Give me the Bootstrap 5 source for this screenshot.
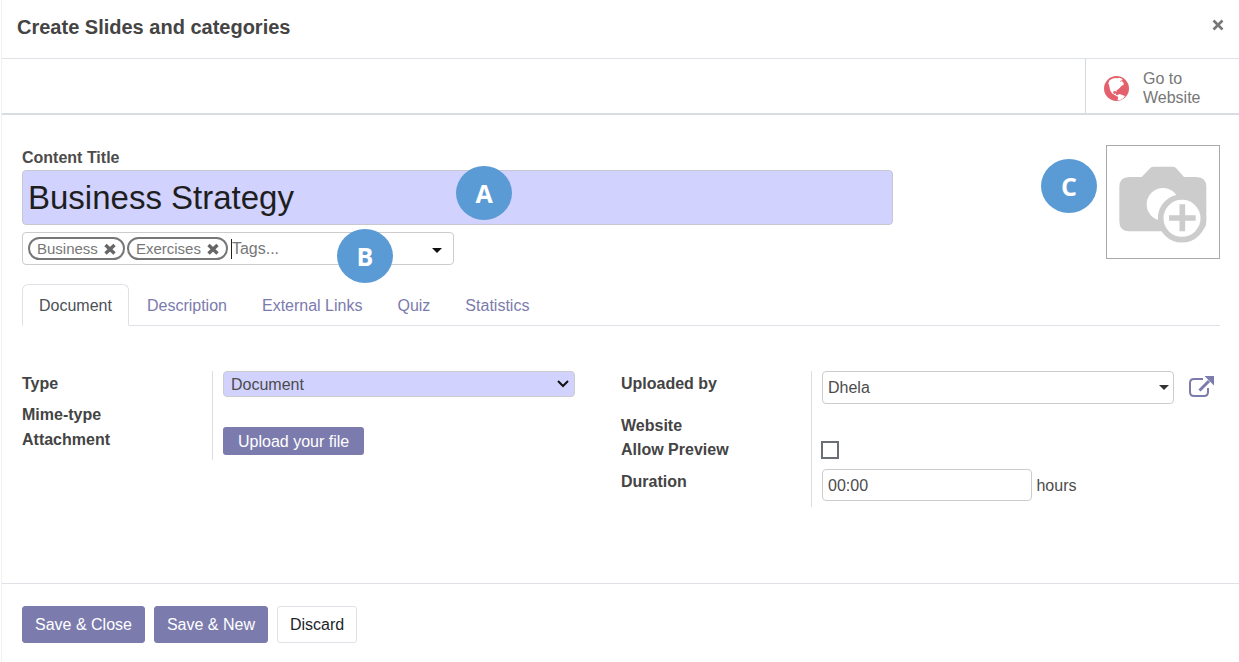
<!DOCTYPE html>
<html lang="en">
<head>
<meta charset="utf-8">
<meta name="viewport" content="width=device-width, initial-scale=1">
<title>Create Slides and categories</title>
<link href="https://cdn.jsdelivr.net/npm/bootstrap@5.3.0/dist/css/bootstrap.min.css" rel="stylesheet">
<style>
  body { font-family: "Liberation Sans", Arial, sans-serif; font-size: 16px; line-height: 24px; color: #4c4c4c; background: #fff; }
  .dialog { min-height: 100vh; margin-left: 1px; border-left: 1px solid #f0f0f0; }
  .dialog-head { height: 59px; padding: 0 10px 4px 15px; border-bottom: 1px solid #dee2e6; }
  .dialog-head h1 { font-size: 20px; font-weight: 700; line-height: 30px; color: #444; }
  .close-btn { padding: 5px; line-height: 0; margin-bottom: 4px; color: #777; }
  .stat-bar { height: 56px; border-bottom: 2px solid #d8dde3; }
  .stat-btn { width: 154px; padding: 4px 16px 0 18px; gap: 14px; border: 0; border-left: 1px solid #d5dae0; background: #fff; color: #777; line-height: 19px; text-align: left; }
  .sheet { padding: 30px 19px 0 20px; }
  .title-col { margin-right: 148px; padding-top: 1px; }
  .title-input { height: 55px; padding: 0 5px; font-size: 33px; color: #1e1e1e; background: #d2d2ff; border: 1px solid #c8c8d0; border-radius: 4px; }
  .marker { display: flex; align-items: center; justify-content: center; width: 56px; height: 54px; border-radius: 50%; background: #5b9bd5; color: #fff; font: 700 25px/32px "Open Sans", sans-serif; }
  .marker-a { position: absolute; top: -4px; left: 434px; }
  .marker-b { position: absolute; top: -4px; left: 314px; }
  .marker-c { margin: 14px 9px 0 0; }
  .tag-box { width: 432px; max-width: 100%; height: 33px; margin-top: 7px; padding: 0 11px 0 5px; gap: 2px; border: 1px solid #ccc; border-radius: 4px; }
  .tag { height: 23px; padding: 0 7px; gap: 6px; border: 2px solid #777; border-radius: 12px; color: #777; font-size: 15px; line-height: 19px; }
  .tag button { border: 0; padding: 0; background: none; color: #666; line-height: 0; }
  .tag-entry { width: 90px; height: 20px; margin-left: 1px; padding: 0; border: 0; border-left: 1px solid #222; outline: 0; }
  .tag-entry::placeholder { color: #777; }
  .drop-btn { border: 0; padding: 0; margin-top: 4px; background: none; line-height: 0; color: #111; }
  .picture-btn { width: 114px; height: 114px; padding: 4px 0 0; border: 1px solid #aaa; background: #fff; }
  .nav-tabs { margin-top: 19px; --bs-nav-tabs-link-active-color: #4c5156; --bs-nav-tabs-border-color: #dee2e6; --bs-nav-link-color: #7c7bad; --bs-nav-link-hover-color: #5f5e97; column-gap: 1px; }
  .nav-tabs .nav-link { padding: 9px 16px 7px; line-height: 24px; }
  .groups { display: grid; grid-template-columns: 1fr 1fr; padding-top: 45px; padding-bottom: 40px; }
  .group-left { padding-right: 46px; }
  .field-row { display: flex; min-height: 24px; }
  .field-row > .key { flex: 0 0 190px; font-weight: 700; color: #444; }
  .field-row > .value { flex: 1 1 auto; min-width: 0; padding-left: 10px; border-left: 1px solid #ddd; }
  .h-type { height: 32px; } .h-file { height: 33px; } .h-user { height: 43px; } .h-preview { height: 31px; } .h-time { height: 38px; }
  .h-type > .key, .h-user > .key, .h-file > .key, .h-time > .key { padding-top: 1px; }
  .type-select { display: block; width: 100%; height: 26px; padding: 1px 7px 0; border: 1px solid #ccc; border-radius: 4px; color: #4c4c4c; appearance: none;
    background: #d2d2ff url("data:image/svg+xml,%3Csvg xmlns='http://www.w3.org/2000/svg' width='12' height='8' viewBox='0 0 12 8'%3E%3Cpath d='M1 1l5 5 5-5' fill='none' stroke='%23111' stroke-width='2'/%3E%3C/svg%3E") no-repeat right 5px center; }
  .user-select { flex: 1 1 auto; min-width: 0; height: 33px; padding: 0 5px; border: 1px solid #ccc; border-radius: 4px; color: #4c4c4c; appearance: none;
    background: #fff url("data:image/svg+xml,%3Csvg xmlns='http://www.w3.org/2000/svg' width='10' height='5' viewBox='0 0 10 5'%3E%3Cpath d='M0 0h10L5 5z' fill='%23333'/%3E%3C/svg%3E") no-repeat right 4px center; }
  .open-btn { flex: none; margin: 5px 6px 0 15px; border: 0; padding: 0; background: none; color: #7c7bad; line-height: 0; }
  .upload-btn { display: block; height: 28px; padding: 1px 15px 0; border: 0; border-radius: 3px; background: #7c7bad; color: #fff; }
  .preview-check { display: block; appearance: none; width: 18px; height: 18px; margin: 3px 0 0 -1px; border: 2px solid #6b6f75; background: #fff; }
  .time-input { width: 210px; height: 32px; padding: 1px 5px 0; border: 1px solid #ccc; border-radius: 4px; color: #4c4c4c; }
  .dialog-foot { padding: 22px 20px 19px; gap: 9px; border-top: 1px solid #dee2e6; }
  .dialog-foot .btn { height: 37px; padding: 0 12px; border-radius: 3px; line-height: 24px; }
  .btn-violet { --bs-btn-color: #fff; --bs-btn-bg: #7c7bad; --bs-btn-border-color: #7c7bad; --bs-btn-hover-color: #fff; --bs-btn-hover-bg: #66659c; }
  .btn-plain { --bs-btn-color: #212529; --bs-btn-bg: #fff; --bs-btn-border-color: #dee2e6; --bs-btn-hover-bg: #f5f5f7; }
</style>
</head>
<body>
<div class="dialog d-flex flex-column">
  <header class="dialog-head d-flex align-items-center justify-content-between">
    <h1 class="m-0">Create Slides and categories</h1>
    <button class="close-btn border-0 bg-transparent" type="button" aria-label="Close">
      <svg width="12" height="12" viewBox="0 0 12 12"><path d="M1.500 1.500l9 9M10.500 1.500l-9 9" stroke="currentColor" stroke-width="2.600"/></svg>
    </button>
  </header>

  <div class="stat-bar d-flex justify-content-end">
    <button class="stat-btn d-flex align-items-center" type="button">
      <svg class="flex-shrink-0" width="25" height="25" viewBox="0 0 74 74"><circle cx="37" cy="37" r="37" fill="#e4606d"/>
        <path fill="#fff" d="M13 21l3-8 8-5 9-2 6 1 6-2 8 3 2 4-6 2-2 4 6-3 5 6 0 6-6 2-5 6-5 4-5 4 0 5-4-4-5 2-1 4 4 3 4-2 1 5 5 2-3 2-6-4-8-4-5-8-2-7-1-6zM40 56l6-3 8 3 8 3-3 5-6 5-8 3-5 0 2-8-3-4z"/>
      </svg>
      <span>Go to Website</span>
    </button>
  </div>

  <main class="sheet flex-grow-1">
    <div class="d-flex align-items-start">
      <div class="title-col flex-grow-1">
        <label class="d-block fw-bold" for="title">Content Title</label>
        <div class="position-relative">
          <input class="title-input d-block w-100" id="title" type="text" value="Business Strategy">
          <span class="marker marker-a">A</span>
        </div>
        <div class="tag-box d-flex align-items-center position-relative">
          <span class="tag d-flex align-items-center">Business
            <button type="button" aria-label="Remove Business"><svg width="12" height="12" viewBox="0 0 12 12"><path d="M1.500 2l9 8.500M10.500 2l-9 8.500" stroke="currentColor" stroke-width="3.400"/></svg></button></span>
          <span class="tag d-flex align-items-center">Exercises
            <button type="button" aria-label="Remove Exercises"><svg width="12" height="12" viewBox="0 0 12 12"><path d="M1.500 2l9 8.500M10.500 2l-9 8.500" stroke="currentColor" stroke-width="3.400"/></svg></button></span>
          <input class="tag-entry" type="text" placeholder="Tags..." aria-label="Tags">
          <button class="drop-btn ms-auto" type="button" aria-label="Show tags"><svg width="10" height="5" viewBox="0 0 10 5"><path d="M0 0h10L5 5z" fill="currentColor"/></svg></button>
          <span class="marker marker-b">B</span>
        </div>
      </div>
      <span class="marker marker-c flex-shrink-0">C</span>
      <button class="picture-btn flex-shrink-0" type="button" aria-label="Add picture">
        <svg width="88" height="77" viewBox="297 500 264 231">
          <path fill="#ccc" d="M328 533h37l26-27q4-4 10-4h57q6 0 10 4l24 27h37q30 0 30 30v103q0 30-30 30H328q-30 0-30-30V563q0-30 30-30z"/>
          <circle cx="429" cy="615" r="49" fill="#fff"/>
          <circle cx="486" cy="657" r="64" fill="#fff" stroke="#ccc" stroke-width="17"/>
          <path d="M447 656h80M487 615v81" stroke="#ccc" stroke-width="17"/>
        </svg>
      </button>
    </div>

    <ul class="nav nav-tabs">
      <li class="nav-item"><a class="nav-link active" aria-current="page" href="#document">Document</a></li>
      <li class="nav-item"><a class="nav-link" href="#description">Description</a></li>
      <li class="nav-item"><a class="nav-link" href="#links">External Links</a></li>
      <li class="nav-item"><a class="nav-link" href="#quiz">Quiz</a></li>
      <li class="nav-item"><a class="nav-link" href="#statistics">Statistics</a></li>
    </ul>

    <div class="groups" id="document">
      <div class="group-left">
        <div class="field-row h-type"><label class="key" for="type">Type</label>
          <div class="value"><select class="type-select" id="type"><option>Document</option></select></div></div>
        <div class="field-row"><span class="key">Mime-type</span><div class="value"></div></div>
        <div class="field-row h-file"><label class="key" for="upload">Attachment</label>
          <div class="value"><button class="upload-btn" id="upload" type="button">Upload your file</button></div></div>
      </div>
      <div>
        <div class="field-row h-user"><label class="key" for="user">Uploaded by</label>
          <div class="value d-flex align-items-start"><select class="user-select" id="user"><option>Dhela</option></select>
            <button class="open-btn" type="button" aria-label="Open record"><svg width="25" height="22" viewBox="0 0 25 22"><path d="M14 3H5Q1 3 1 7v9q0 4 4 4h10q4 0 4-4v-4" fill="none" stroke="currentColor" stroke-width="2"/><path d="M10.500 14.500L20 5" stroke="currentColor" stroke-width="3"/><path d="M15.500 0H25v9.500z" fill="currentColor"/></svg></button></div></div>
        <div class="field-row"><span class="key">Website</span><div class="value"></div></div>
        <div class="field-row h-preview"><label class="key" for="preview">Allow Preview</label>
          <div class="value"><input class="preview-check" id="preview" type="checkbox"></div></div>
        <div class="field-row h-time"><label class="key" for="duration">Duration</label>
          <div class="value"><input class="time-input" id="duration" type="text" value="00:00"> hours</div></div>
      </div>
    </div>
  </main>

  <footer class="dialog-foot d-flex">
    <button class="btn btn-violet" type="button">Save &amp; Close</button>
    <button class="btn btn-violet" type="button">Save &amp; New</button>
    <button class="btn btn-plain" type="button">Discard</button>
  </footer>
</div>
<script src="https://cdn.jsdelivr.net/npm/bootstrap@5.3.0/dist/js/bootstrap.bundle.min.js"></script>
</body>
</html>
